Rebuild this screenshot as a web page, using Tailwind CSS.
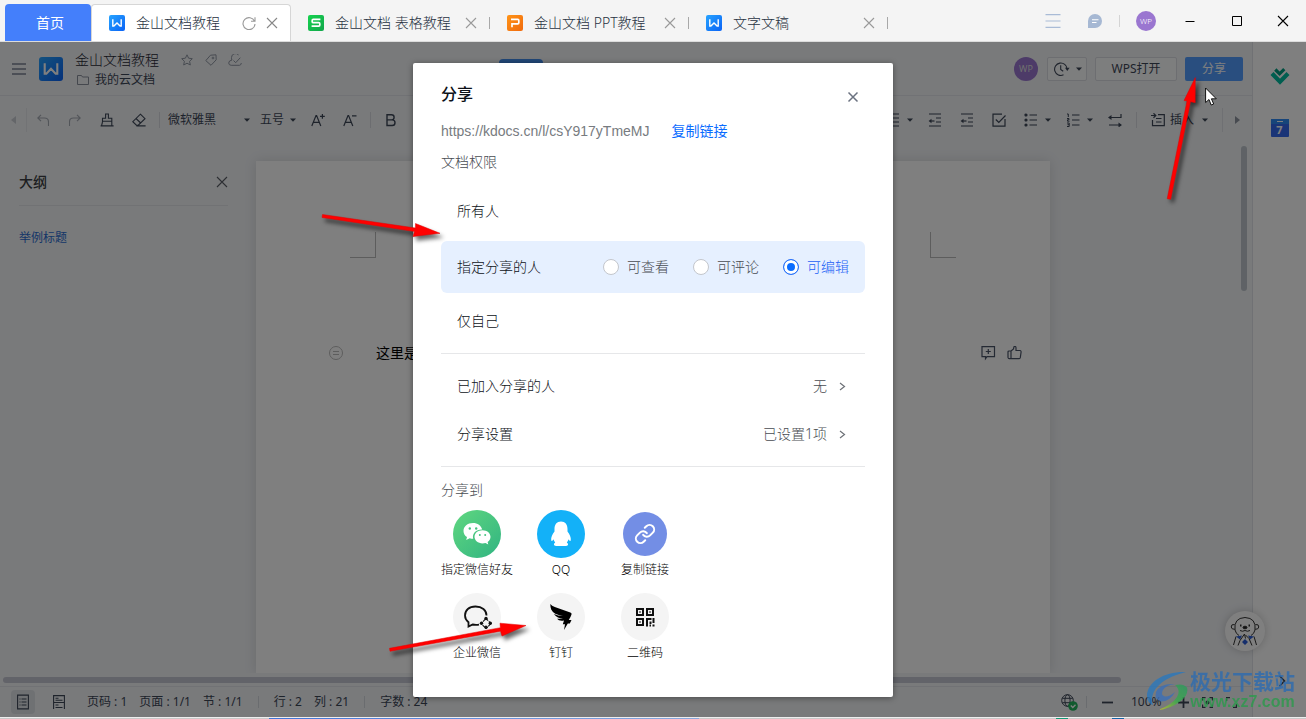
<!DOCTYPE html>
<html lang="zh-CN">
<head>
<meta charset="utf-8">
<meta name="viewport" content="width=device-width, initial-scale=1">
<title>金山文档教程</title>
<script src="https://cdn.jsdelivr.net/npm/@tailwindcss/browser@4"></script>
</head>
<body class="flex h-screen flex-col overflow-hidden bg-[#f4f4f4] font-['Noto_Sans','Noto_Sans_CJK_SC',sans-serif] text-sm font-light text-[#3d4757]">

<svg class="absolute size-0" aria-hidden="true">
  <defs>
    <linearGradient id="g-blue" x1="0" y1="0" x2="1" y2="1"><stop offset="0" stop-color="#27a4ff"/><stop offset="1" stop-color="#0a62f5"/></linearGradient>
    <linearGradient id="g-green" x1="0" y1="0" x2="1" y2="1"><stop offset="0" stop-color="#16d34f"/><stop offset="1" stop-color="#12a64b"/></linearGradient>
    <linearGradient id="g-orange" x1="0" y1="0" x2="1" y2="1"><stop offset="0" stop-color="#ff9417"/><stop offset="1" stop-color="#f06a0e"/></linearGradient>
    <symbol id="i-w" viewBox="0 0 16 16"><rect width="16" height="16" rx="2" fill="url(#g-blue)"/><path d="M3.800 4.200v6.900h1.100L8 7.900l3.100 3.200h1.100V4.200" fill="none" stroke="#fff" stroke-width="1.400"/></symbol>
    <symbol id="i-s" viewBox="0 0 16 16"><rect width="16" height="16" rx="2" fill="url(#g-green)"/><path d="M12.400 4.400H5.200q-1 0-1 1v1.300q0 1 1 1h5.600q1 0 1 1v1.400q0 1-1 1H3.600" fill="none" stroke="#fff" stroke-width="1.700"/></symbol>
    <symbol id="i-p" viewBox="0 0 16 16"><rect width="16" height="16" rx="2" fill="url(#g-orange)"/><path d="M4 4.400h6.800q1 0 1 1v2.400q0 1-1 1H5v3.400" fill="none" stroke="#fff" stroke-width="1.700"/></symbol>
    <symbol id="i-x" viewBox="0 0 12 12"><path d="M1 1l10 10M11 1L1 11" fill="none" stroke="currentColor" stroke-width="1.100"/></symbol>
    <symbol id="i-caret" viewBox="0 0 6 4"><path d="M0 .5h6L3 3.700z" fill="currentColor"/></symbol>
  </defs>
</svg>

<!-- Window title bar with document tabs -->
<header class="flex h-[42px] shrink-0 items-end border-b border-[#dcdcdc] pl-[5px]">
  <button class="h-[37px] w-[86px] rounded-t-sm bg-[#447ffb] pl-1 font-normal text-white">首页</button>
  <nav class="flex h-[37px] items-center text-[#283242]">
    <div class="flex h-full w-[200px] items-center rounded-t-sm border border-b-0 border-[#d6d6d6] bg-white pl-[17px] pr-3">
      <svg class="size-4 shrink-0"><use href="#i-w"/></svg>
      <a href="#" class="ml-[11px] flex-1">金山文档教程</a>
      <button aria-label="刷新" class="mr-[10px] text-[#999]"><svg class="size-[14px]" viewBox="0 0 14 14" fill="none" stroke="currentColor" stroke-width="1.100"><path d="M12.500 5.200A6 6 0 1 0 13 8M13 1.200v4H9"/></svg></button>
      <button aria-label="关闭" class="text-[#888]"><svg class="size-3"><use href="#i-x"/></svg></button>
    </div>
    <div class="flex h-full w-[199px] items-center pl-[17px]">
      <svg class="size-4 shrink-0"><use href="#i-s"/></svg>
      <a href="#" class="ml-[11px] flex-1 overflow-hidden whitespace-nowrap">金山文档 表格教程</a>
      <button aria-label="关闭" class="mr-3 text-[#999]"><svg class="size-3"><use href="#i-x"/></svg></button>
      <span class="h-3 w-px bg-[#a8a8a8]"></span>
    </div>
    <div class="flex h-full w-[199px] items-center pl-[17px]">
      <svg class="size-4 shrink-0"><use href="#i-p"/></svg>
      <a href="#" class="ml-[11px] flex-1 overflow-hidden whitespace-nowrap">金山文档 PPT教程</a>
      <button aria-label="关闭" class="mr-3 text-[#999]"><svg class="size-3"><use href="#i-x"/></svg></button>
      <span class="h-3 w-px bg-[#a8a8a8]"></span>
    </div>
    <div class="flex h-full w-[199px] items-center pl-[17px]">
      <svg class="size-4 shrink-0"><use href="#i-w"/></svg>
      <a href="#" class="ml-[11px] flex-1">文字文稿</a>
      <button aria-label="关闭" class="mr-3 text-[#999]"><svg class="size-3"><use href="#i-x"/></svg></button>
      <span class="h-3 w-px bg-[#a8a8a8]"></span>
    </div>
  </nav>
  <div class="ml-auto flex h-full items-center pr-[17px]">
    <button aria-label="菜单" class="text-[#a9bbd6]"><svg class="size-4" viewBox="0 0 16 16" stroke="currentColor" stroke-width="1.200"><path d="M.5 1.600h15M.5 8h15M.5 14.400h15"/></svg></button>
    <button aria-label="消息" class="ml-[27px]"><svg class="size-[14px]" viewBox="0 0 14 14"><path d="M7 0a7 7 0 0 1 0 14H0V7a7 7 0 0 1 7-7z" fill="#a6b8d3"/><path d="M4 5.700h6.500M4 8.500h4.500" stroke="#fff" stroke-width="1.100"/></svg></button>
    <span class="ml-[17px] h-3 w-px bg-[#d4d4d4]"></span>
    <span class="ml-4 flex size-5 items-center justify-center rounded-full bg-[#9a76d0] text-[8px] text-white">WP</span>
    <button aria-label="最小化" class="ml-7 text-black"><svg class="size-3" viewBox="0 0 12 12" stroke="currentColor"><path d="M1.500 6.500h9"/></svg></button>
    <button aria-label="最大化" class="ml-[35px] text-black"><svg class="size-3" viewBox="0 0 12 12" fill="none" stroke="currentColor"><path d="M1.500 1.500h9v9h-9z"/></svg></button>
    <button aria-label="关闭窗口" class="ml-[34px] text-black"><svg class="size-3"><use href="#i-x"/></svg></button>
  </div>
</header>

<div class="relative flex min-h-0 flex-1 bg-[#f2f4f7]">
  <main class="flex min-w-0 flex-1 flex-col">
    <!-- Document header -->
    <div class="flex h-[54px] shrink-0 items-center border-b border-[#e3e5ea]">
      <div class="flex w-[499px] shrink-0 items-center pl-3">
        <button aria-label="菜单" class="text-[#7c8394]"><svg class="size-[14px]" viewBox="0 0 14 14" stroke="currentColor" stroke-width="1.600"><path d="M0 2h14M0 7h14M0 12h14"/></svg></button>
        <svg class="ml-[13px] size-6"><use href="#i-w"/></svg>
        <div class="ml-3 pt-0.5">
          <div class="flex h-[21px] items-center">
            <h1 class="leading-5 text-[#1f2733]">金山文档教程</h1>
            <button aria-label="收藏" class="ml-[22px] text-[#9097a3]"><svg class="size-3" viewBox="0 0 12 12" fill="none" stroke="currentColor"><path d="M6 .8l1.600 3.400 3.700.5-2.700 2.600.7 3.700L6 9.200 2.700 11l.7-3.700L.7 4.700l3.700-.5z"/></svg></button>
            <button aria-label="标签" class="ml-3 text-[#9097a3]"><svg class="size-3" viewBox="0 0 12 12" fill="none" stroke="currentColor"><path d="M5.500 1.200l5.500-.4.200 5L6 11.300.8 6.600z"/><circle cx="8" cy="4" r=".9"/></svg></button>
            <button aria-label="同步" class="ml-[11px] text-[#9097a3]"><svg class="h-3 w-[14px]" viewBox="0 0 14 12" fill="none" stroke="currentColor"><path d="M10.500.9A4 4 0 0 0 3.500 3.500Q3.300 5 4 6 .8 6.500.7 9q.2 2.300 2.500 2.300h8.300Q13.300 11 13.300 9M5.500 6.500l2.200 2.200 4.600-5"/></svg></button>
          </div>
          <a href="#" class="flex h-[19px] items-center gap-1.5 pl-0.5 text-xs font-normal"><svg class="h-[10px] w-3 text-[#8b919c]" viewBox="0 0 12 10" fill="none" stroke="currentColor"><path d="M.5.500h4l1 1.500h6v7.500H.5z"/></svg>我的云文档</a>
        </div>
      </div>
      <span class="h-5 w-11 rounded-sm bg-[#438eee]"></span>
      <div class="ml-auto flex items-center pr-[9px] text-xs font-normal">
        <span class="flex size-6 items-center justify-center rounded-full bg-[#9a76d0] text-[9px] text-[#ddd]">WP</span>
        <button aria-label="历史记录" class="ml-[9px] flex h-6 w-10 items-center justify-between rounded-xs border border-[#dadce2] bg-[#fbfcfd] pl-1.5 pr-1"><svg class="h-[14px] w-4" viewBox="0 0 16 14" fill="none" stroke="currentColor" stroke-width="1.100"><path d="M13 7a6.200 6.200 0 1 0-3.500 5.800M6.700 3.300v4.200l2.500 1.800"/><path d="M11 5.800h4.600L13.300 9z" fill="currentColor" stroke="none"/></svg><svg class="h-1 w-1.5"><use href="#i-caret"/></svg></button>
        <button class="ml-2 h-6 w-[82px] rounded-xs border border-[#dadce2] bg-[#fbfcfd]">WPS打开</button>
        <button class="ml-2 h-6 w-[58px] rounded-xs bg-[#529dff] text-white">分享</button>
      </div>
    </div>

    <!-- Formatting toolbar -->
    <div class="flex h-12 shrink-0 items-center justify-between text-xs font-normal">
      <div class="flex h-8 items-center">
        <button aria-label="向左滚动" class="flex h-6 w-[27px] items-center justify-center border-r border-[#e4e6ea] text-[#c9ccd2]"><svg class="h-2 w-[5px]" viewBox="0 0 5 8"><path d="M5 0v8L0 4z" fill="currentColor"/></svg></button>
        <button aria-label="撤销" class="flex w-8 justify-center text-[#a5aab3]"><svg class="size-3" viewBox="0 0 12 12" fill="none" stroke="currentColor" stroke-width="1.100"><path d="M4 .8L.8 4 4 7.200M.8 4h6.700q4 0 4 4v4"/></svg></button>
        <button aria-label="重做" class="flex w-8 justify-center text-[#a5aab3]"><svg class="size-3" viewBox="0 0 12 12" fill="none" stroke="currentColor" stroke-width="1.100"><path d="M8 .8L11.200 4 8 7.200M11.200 4H4.500q-4 0-4 4v4"/></svg></button>
        <button aria-label="格式刷" class="flex w-8 justify-center"><svg class="size-[14px]" viewBox="0 0 14 14" fill="none" stroke="currentColor" stroke-width="1.100"><path d="M2.500 9V5.200H5.600V1h2.800v4.200h3.400V9M2.500 8.200h9.300v4.600M.6 12.900h13M2.500 9L1.500 12.900"/></svg></button>
        <button aria-label="清除格式" class="flex w-8 justify-center"><svg class="size-[14px]" viewBox="0 0 14 14" fill="none" stroke="currentColor" stroke-width="1.100"><path d="M8.400 1.200l4.600 4.500-6.700 6.500H4.400L.8 8.700zM4 5.500l4.700 4.500M4.400 12.900h9.200"/></svg></button>
        <span class="ml-1 h-4 w-px bg-[#d9dbe0]"></span>
        <label class="ml-2 flex w-[82px] items-center justify-between"><select aria-label="字体" class="w-[70px] appearance-none"><option>微软雅黑</option></select><svg class="h-1 w-1.5"><use href="#i-caret"/></svg></label>
        <label class="ml-[10px] flex w-9 items-center justify-between"><select aria-label="字号" class="w-7 appearance-none"><option>五号</option></select><svg class="h-1 w-1.5 shrink-0"><use href="#i-caret"/></svg></label>
        <button aria-label="增大字号" class="ml-[6px] flex w-8 justify-center"><svg class="size-[14px]" viewBox="0 0 14 14" fill="none" stroke="currentColor" stroke-width="1.200"><path d="M.8 13L5 2.500h.6L9.800 13M2.400 9.400h5.900M9 3.300h4.800M11.400 1v4.700"/></svg></button>
        <button aria-label="减小字号" class="flex w-8 justify-center"><svg class="size-[14px]" viewBox="0 0 14 14" fill="none" stroke="currentColor" stroke-width="1.200"><path d="M.8 13L5 2.500h.6L9.800 13M2.400 9.400h5.900M9 2.800h4.500"/></svg></button>
        <span class="ml-1 h-4 w-px bg-[#d9dbe0]"></span>
        <button aria-label="加粗" class="ml-1 flex w-8 justify-center"><svg class="size-[14px]" viewBox="0 0 14 14" fill="none" stroke="currentColor" stroke-width="1.400"><path d="M3 1.700h4.500a2.500 2.500 0 0 1 0 5.200H3zm0 5.200h5.200a2.800 2.800 0 0 1 0 5.600H3z"/></svg></button>
      </div>
      <div class="flex h-8 items-center">
        <button aria-label="对齐" class="flex w-[42px] items-center pl-[9px]"><svg class="size-[14px]" viewBox="0 0 14 14" stroke="currentColor" stroke-width="1.200"><path d="M0 1h13M0 5h13M0 9h13M0 13h13"/></svg><svg class="ml-[7px] h-1 w-1.5"><use href="#i-caret"/></svg></button>
        <button aria-label="减少缩进" class="flex w-8 justify-center"><svg class="size-[14px]" viewBox="0 0 14 14" fill="none" stroke="currentColor" stroke-width="1.200"><path d="M1 1h12M8 5h5M8 9h5M1 13h12"/><path d="M6.500 8H2"/><path d="M3.500 5.800v4.400L.6 8z" fill="currentColor" stroke="none"/></svg></button>
        <button aria-label="增加缩进" class="flex w-8 justify-center"><svg class="size-[14px]" viewBox="0 0 14 14" fill="none" stroke="currentColor" stroke-width="1.200"><path d="M1 1h12M8 5h5M8 9h5M1 13h12"/><path d="M6.500 8H2"/><path d="M3.500 5.800v4.400L.6 8z" fill="currentColor" stroke="none"/></svg></button>
        <button aria-label="任务列表" class="flex w-8 justify-center"><svg class="size-[14px]" viewBox="0 0 14 14" fill="none" stroke="currentColor" stroke-width="1.200"><path d="M10 1.100H1v12h12V6M3.800 6.500l3 3L13.500 2.500"/></svg></button>
        <button aria-label="项目符号" class="flex w-[42px] items-center pl-[9px]"><svg class="size-[14px]" viewBox="0 0 14 14" fill="currentColor" stroke="currentColor" stroke-width="1.200"><circle cx="2" cy="2" r="1"/><circle cx="2" cy="7" r="1"/><circle cx="2" cy="12" r="1"/><path d="M5.500 2H13M5.500 7H13M5.500 12H13"/></svg><svg class="ml-[7px] h-1 w-1.5"><use href="#i-caret"/></svg></button>
        <button aria-label="编号" class="flex w-[42px] items-center pl-[9px]"><svg class="size-[14px]" viewBox="0 0 14 14" fill="none" stroke="currentColor"><path d="M6 2h7.500M6 7h7.500M6 12h7.500" stroke-width="1.200"/><path d="M1 1h1.300V4M1 5.500h2v1.300H1.500v1.400H3.500M1 10h2.200v3.500H1M1.500 11.700h1.700"/></svg><svg class="ml-[7px] h-1 w-1.5"><use href="#i-caret"/></svg></button>
        <button aria-label="换行" class="flex w-8 justify-center"><svg class="size-[14px]" viewBox="0 0 14 14" fill="none" stroke="currentColor" stroke-width="1.200"><path d="M13 1v3.500H2M1 12H13"/><path d="M3.500 2v5L0 4.500zM10.500 9.500v5L14 12z" fill="currentColor" stroke="none"/></svg></button>
        <span class="ml-[5px] h-4 w-px bg-[#d9dbe0]"></span>
        <button class="ml-1 flex w-[81px] items-center pl-[10px]"><svg class="size-[14px]" viewBox="0 0 14 14" fill="none" stroke="currentColor" stroke-width="1.200"><path d="M7 1.600h6.300v11H1.500V7M5 5.500h5.500M5 9h5.500M0 2.500h4.500M2.500.3l2.300 2.200-2.300 2.200"/></svg><span class="ml-[5px]">插入</span><svg class="ml-2 h-1 w-1.5"><use href="#i-caret"/></svg></button>
        <button aria-label="向右滚动" class="flex h-6 w-[30px] items-center justify-center border-l border-[#dfe1e6] text-[#8f95a0]"><svg class="h-2 w-[5px]" viewBox="0 0 5 8"><path d="M0 0v8l5-4z" fill="currentColor"/></svg></button>
      </div>
    </div>

    <!-- Outline panel and page -->
    <div class="flex min-h-0 flex-1 overflow-hidden">
      <aside class="w-64 shrink-0 pl-[19px] pr-7 pt-6">
        <div class="flex h-[38px] items-start justify-between border-b border-[#e2e4e8]">
          <h2 class="py-1 font-medium leading-5 text-[#3d3f44]">大纲</h2>
          <button aria-label="关闭大纲" class="py-2 text-[#5a5e66]"><svg class="size-3"><use href="#i-x"/></svg></button>
        </div>
        <a href="#" class="mt-[22px] block text-xs font-normal leading-5 text-[#2b6cd0]">举例标题</a>
      </aside>
      <article class="mt-[17px] w-[794px] shrink-0 bg-white shadow-[0_0_12px_rgba(0,0,0,0.12)]">
        <div class="flex justify-between px-[94px] pt-[71px]">
          <span class="size-[26px] border-b border-r border-[#bbb]"></span>
          <span class="size-[26px] border-b border-l border-[#bbb]"></span>
        </div>
        <div class="mt-[84px] flex h-[22px] items-center pl-[73px] pr-7 font-normal text-black">
          <svg class="size-[14px] text-[#bbb]" viewBox="0 0 14 14" fill="none" stroke="currentColor"><circle cx="7" cy="7" r="6.500"/><path d="M4 5.500h6M4 8.500h6"/></svg>
          <p class="ml-[33px]">这里是</p>
          <button aria-label="添加评论" class="ml-auto text-[#4a5468]"><svg class="size-[15px]" viewBox="0 0 15 15" fill="none" stroke="currentColor" stroke-width="1.200"><path d="M1 .6h12.500v10H6l-1.500 2v-2H1zM7.300 3v5M4.800 5.500h5"/></svg></button>
          <button aria-label="点赞" class="ml-[11px] text-[#4a5468]"><svg class="size-[15px]" viewBox="0 0 15 15" fill="none" stroke="currentColor" stroke-width="1.200"><path d="M4 5L6.500 3 7 .7Q8.800-.1 9 1.700V4.500h4.200q1 .3.900 1.500l-.8 5.700q-.3 1-1 1H4M4 5v7.700M4 5H2Q1 5 1 6v5.500q.2 1.200 1.200 1.200H4"/></svg></button>
        </div>
      </article>
      <div class="ml-auto mr-[5px] mt-0.5 h-[145px] w-1.5 rounded-full bg-[#bfc5cc]"></div>
    </div>
    <div class="flex h-[13px] shrink-0 items-start pl-[3px] pr-[131px] pt-1"><div class="h-1.5 flex-1 rounded-full bg-[#c4c6d2]"></div></div>

    <!-- Status bar -->
    <footer class="flex h-[31px] shrink-0 items-center border-t border-[#e3e5ea] pl-[11px] pr-[15px] text-xs font-normal">
      <button aria-label="页面视图" class="flex size-6 items-center justify-center rounded-sm bg-[#dfe3e7]"><svg class="h-4 w-3" viewBox="0 0 12 16" fill="none" stroke="currentColor" stroke-width="1.100"><path d="M.6 1.100h10.800v13.800H.6zM2.500 5h1M4.500 5h5M2.500 8h1M4.500 8h5M2.500 11h1M4.500 11h5"/></svg></button>
      <button aria-label="目录视图" class="ml-[18px]"><svg class="h-[14px] w-3" viewBox="0 0 12 14" fill="none" stroke="currentColor" stroke-width="1.100"><path d="M.6 14V.6h10.800V14M.6 7.500h10.800M2.500 3.300h3M2.500 5.300h7M2.500 10h3M2.500 12.500h7"/></svg></button>
      <span class="ml-[22px]">页码 : 1</span><span class="ml-3">页面 : 1/1</span><span class="ml-3">节 : 1/1</span>
      <span class="mx-[15px] h-3 w-px bg-[#d5d8de]"></span>
      <span>行 : 2</span><span class="ml-3">列 : 21</span>
      <span class="mx-[15px] h-3 w-px bg-[#d5d8de]"></span>
      <span>字数 : 24</span>
      <button aria-label="语言" class="ml-auto"><svg class="size-[17px]" viewBox="0 0 17 17" fill="none" stroke="currentColor"><circle cx="6.500" cy="6.500" r="5.800"/><ellipse cx="6.500" cy="6.500" rx="2.600" ry="5.800"/><path d="M1.300 4.300h10.400M1.300 8.700h10.400"/><circle cx="12" cy="12" r="4.800" fill="#22b45c" stroke="none"/><path d="M9.800 11.500l2 2 2.700-2.700" stroke="#fff" stroke-width="1.400"/></svg></button>
      <span class="ml-2 h-3 w-px bg-[#d5d8de]"></span>
      <button aria-label="缩小" class="ml-[15px]"><svg class="size-[11px]" viewBox="0 0 11 11" stroke="currentColor" stroke-width="1.800"><path d="M0 5.500h11"/></svg></button>
      <span class="ml-[18px] w-[30px]">100%</span>
      <button aria-label="放大" class="ml-[17px]"><svg class="size-[11px]" viewBox="0 0 11 11" stroke="currentColor" stroke-width="1.800"><path d="M0 5.500h11M5.500 0v11"/></svg></button>
      <button aria-label="适应页宽" class="ml-[13px]"><svg class="size-[11px]" viewBox="0 0 11 11" fill="none" stroke="currentColor" stroke-width="1.200"><path d="M.6 3.500V.6h3M7.500.6h2.900v2.900M10.400 7.500v2.900H7.500M3.500 10.400H.6V7.500"/><circle cx="5.500" cy="5.500" r="1.500" fill="currentColor"/></svg></button>
      <button aria-label="全屏" class="ml-[13px]"><svg class="size-[11px]" viewBox="0 0 11 11" fill="none" stroke="currentColor" stroke-width="1.200"><path d="M.6 4V.6H4M10.400 7v3.400H7"/></svg></button>
    </footer>
  </main>

  <!-- Side apps -->
  <aside class="flex w-[54px] shrink-0 flex-col items-center border-l border-[#e0e3e8] bg-white pt-[25px]">
    <button aria-label="稻壳"><svg class="h-[18px] w-5" viewBox="0 0 20 18" fill="none"><path d="M2 6.500l8 8.300 8-8.300" stroke="#00bda0" stroke-width="4.200"/><path d="M5.300 2.500l4.300 4.300 4.700-4.700" stroke="#009c80" stroke-width="3.200"/></svg></button>
    <button class="mt-[34px] flex h-[18px] w-[18px] flex-col items-center rounded-[1px] bg-[#3568ee] text-[11px] font-bold leading-3 text-white" aria-label="日历"><span class="flex h-[5px] w-full items-center justify-center bg-[#2e8bf5]"><span class="h-px w-1.5 bg-white"></span></span>7</button>
    <button aria-label="展开" class="mb-[30px] mt-auto pl-1"><svg class="h-3 w-2" viewBox="0 0 8 12" fill="none" stroke="currentColor" stroke-width="1.600"><path d="M1.500.8L6.500 6l-5 5.200"/></svg></button>
  </aside>

  <button aria-label="助手" class="absolute bottom-[66px] right-[41px] flex size-10 items-center justify-center rounded-full bg-white shadow-[0_0_10px_rgba(0,0,0,0.2)]">
    <svg class="size-[30px]" viewBox="0 0 30 30" fill="none" stroke="#333"><path d="M5 14Q3.500 2 15 1.500 26.500 2 25 14q-1 4-4 5.500M5 14q1 4 4 5.500"/><path d="M4.600 8.500Q1 8 1.200 11q.3 2.500 3.600 2.300M25.400 8.500Q29 8 28.800 11q-.3 2.500-3.600 2.300"/><path d="M10 9.500h1.500M18.500 9.500H20" stroke-width="1.800"/><ellipse cx="15" cy="11.500" rx="2" ry="1.300" fill="#222"/><path d="M10 14.500q2.500 1.500 5 0 2.500 1.500 5 0"/><path d="M6 20.500l4 3 2-4zM24 20.500l-4 3-2-4zM15 23l3 3-3 3-3-3z" fill="#2c5fd8" stroke="none"/><path d="M6 20.500L3.500 29M8 29.500l2-5 4.500-6.500 1 4.500M22 29.500l-3-7-3.500-3.500M24 20.500l2.500 8.500"/></svg>
  </button>

  <!-- Share dialog -->
  <div class="absolute inset-0 flex items-center justify-center bg-black/50">
    <section role="dialog" aria-labelledby="dlg-title" class="relative w-[480px] rounded-xs bg-white pb-[35px] pt-5 text-[#0d1118] shadow-[0_1px_6px_rgba(0,0,0,0.4)]">
      <div class="flex items-start justify-between pl-7 pr-[26px]">
        <h2 id="dlg-title" class="text-base font-medium leading-[22px]">分享</h2>
        <button aria-label="关闭" class="flex size-7 items-center justify-center text-[#6b7280]"><svg class="size-3" viewBox="0 0 12 12" fill="none" stroke="currentColor" stroke-width="1.500"><path d="M1.500 1.500l9 9M10.500 1.500l-9 9"/></svg></button>
      </div>
      <div class="flex h-10 items-center gap-[22px] px-7">
        <span class="font-['Liberation_Sans',sans-serif] text-[#777b80]">https://kdocs.cn/l/csY917yTmeMJ</span>
        <a href="#" class="font-normal text-[#0a6cff]">复制链接</a>
      </div>
      <p class="px-7 leading-[22px] text-[#484c52]">文档权限</p>
      <div class="mx-7 mt-3">
        <div class="flex h-[52px] items-center px-4">所有人</div>
        <div class="mt-1 flex h-[52px] items-center rounded-md bg-[#e6f0ff] px-4">
          <span>指定分享的人</span>
          <div class="ml-auto flex gap-6 text-[#484c52]">
            <label class="flex items-center gap-2"><input type="radio" name="perm" class="size-4 appearance-none rounded-full border border-[#c3c6cc] bg-white">可查看</label>
            <label class="flex items-center gap-2"><input type="radio" name="perm" class="size-4 appearance-none rounded-full border border-[#c3c6cc] bg-white">可评论</label>
            <label class="flex items-center gap-2 text-[#1c60f5]"><input type="radio" name="perm" checked class="size-4 appearance-none rounded-full border border-[#2e73f8] bg-[#0a6cff] shadow-[inset_0_0_0_3px_#fff]">可编辑</label>
          </div>
        </div>
        <div class="mb-1 flex h-14 items-center px-4">仅自己</div>
      </div>
      <div class="mx-7 border-y border-[#e6e7e9] py-2">
        <button class="flex h-12 w-full items-center px-4"><span>已加入分享的人</span><span class="ml-auto text-[#484c52]">无</span><svg class="ml-[10px] size-3 text-[#6e7278]" viewBox="0 0 12 12" fill="none" stroke="currentColor" stroke-width="1.200"><path d="M3 3l4.500 3.500L3 10"/></svg></button>
        <button class="flex h-12 w-full items-center px-4"><span>分享设置</span><span class="ml-auto text-[#484c52]">已设置1项</span><svg class="ml-[10px] size-3 text-[#6e7278]" viewBox="0 0 12 12" fill="none" stroke="currentColor" stroke-width="1.200"><path d="M3 3l4.500 3.500L3 10"/></svg></button>
      </div>
      <p class="px-7 pt-3 leading-[22px] text-[#484c52]">分享到</p>
      <div class="ml-[22px] mt-[9px] grid w-[252px] grid-cols-3 gap-y-[14px] text-xs leading-[18px] text-black">
        <button class="flex flex-col items-center gap-[3px]"><span class="flex size-12 items-center justify-center rounded-full bg-linear-135 from-[#5fd77f] to-[#2fb481]"><svg class="h-[22px] w-7" viewBox="0 0 28 22" fill="#fff"><path d="M10 0C4.500 0 .5 3.500.5 8c0 2.600 1.300 4.700 3.500 6l-.8 3 3.500-1.700q1.700.5 3.500.5C8.800 10 13.500 6.300 19.200 6.500 18.300 2.700 14.500 0 10 0z"/><path d="M27.500 13.800c0-3.700-3.600-6.500-8-6.500s-8 2.800-8 6.500 3.600 6.600 8 6.600q1.500 0 3-.4l2.800 1.500-.7-2.500c1.800-1.300 2.900-3.100 2.900-5.200z"/><g fill="#46c480"><circle cx="6.800" cy="5.500" r="1.200"/><circle cx="13.200" cy="5.500" r="1.200"/><circle cx="16.800" cy="12" r="1"/><circle cx="22.200" cy="12" r="1"/></g></svg></span>指定微信好友</button>
        <button class="flex flex-col items-center gap-[3px]"><span class="flex size-12 items-center justify-center rounded-full bg-[#13b1f8]"><svg class="h-[26px] w-[22px]" viewBox="0 0 22 26" fill="#fff"><path d="M11 .5C6.800.5 4.500 3.500 4.500 8v2.500C2.500 13 .8 16.500 1.200 19.200c.4 1.500 1.500.5 2.300-.9q.5 2 1.700 3.300c-1.700.9-1.900 3.200 1 3.400h4.800H16c2.700-.2 2.500-2.500.8-3.400q1.200-1.300 1.700-3.300c.8 1.400 1.900 2.400 2.300.9.400-2.700-1.300-6.200-3.300-8.700V8C17.500 3.500 15.200.5 11 .5z"/></svg></span>QQ</button>
        <button class="flex flex-col items-center gap-[3px]"><span class="flex size-12 items-center justify-center"><span class="flex size-11 items-center justify-center rounded-full bg-[#738ee5]"><svg class="size-[22px]" viewBox="0 0 24 24" fill="none" stroke="#fff" stroke-width="2.200" stroke-linecap="round" stroke-linejoin="round"><path d="M10 13a5 5 0 0 0 7.540.54l3-3a5 5 0 0 0-7.070-7.070l-1.720 1.710"/><path d="M14 11a5 5 0 0 0-7.540-.54l-3 3a5 5 0 0 0 7.070 7.070l1.710-1.710"/></svg></span></span>复制链接</button>
        <button class="flex flex-col items-center gap-[3px]"><span class="flex size-12 items-center justify-center rounded-full bg-[#f4f4f4]"><svg class="h-6 w-[30px]" viewBox="0 0 30 24" fill="none" stroke="#111" stroke-width="1.800"><path d="M24.500 10.500C24.500 5 20 1.500 13.500 1.500S3 5.200 3 10.500c0 3 1.500 5 3.500 6.700v4.300l4.200-2q3 .6 6.300.1"/><path d="M24 13.500l5 5-5 5-5-5z" stroke-width="1.100" stroke-dasharray="3 1"/><g fill="#111" stroke="none"><circle cx="24" cy="13.500" r="1.700"/><circle cx="28.300" cy="18.200" r="1.700"/><circle cx="19.500" cy="18.200" r="1.700"/><circle cx="24" cy="22.300" r="1.700"/></g></svg></span>企业微信</button>
        <button class="flex flex-col items-center gap-[3px]"><span class="flex size-12 items-center justify-center rounded-full bg-[#f4f4f4]"><svg class="h-[26px] w-[22px]" viewBox="0 0 22 26" fill="#000"><path d="M.3 0q1.500 2 4.500 3l15.500 5.500q1.700.7 1.200 2-.8 2.500-2.700 5.500H21.500l-1.700 3.500h-2L14 26l1-5.800h-2.200l1.200-3.700q-5 .9-7-1.800 3 .4 6-.3-5.500 0-9.200-4.500Q8 12 13 12 3.500 10.500 1.200 5.500.3 3 .3 0z"/></svg></span>钉钉</button>
        <button class="flex flex-col items-center gap-[3px]"><span class="flex size-12 items-center justify-center rounded-full bg-[#f4f4f4]"><svg class="size-5" viewBox="0 0 20 20" fill="none" stroke="#111" stroke-width="2"><path d="M2 2h6v6H2zM12 2h6v6h-6zM2 12h6v6H2z"/><path d="M4.500 5h1M14.500 5h1M4.500 15h1M11 12h5.500M12 11v8.500M15.500 14.500v2.500M18.500 11v5M14.500 18.500h1.500M17.500 18.500h2"/></svg></span>二维码</button>
      </div>

      <!-- Pointer arrows -->
      <svg class="pointer-events-none absolute left-[-97px] top-[145px] h-10 w-32 drop-shadow-[3px_4px_2px_rgba(0,0,0,0.6)]" viewBox="0 0 128 40"><path d="M6.500 6.500L6 9.500 98.500 23.500l-1.500 5L124 25.300 99.500 15.500l-.1 4.500z" fill="#f00" stroke="#e00000" stroke-width=".5"/></svg>
      <svg class="pointer-events-none absolute left-[-30px] top-[552px] h-[46px] w-[150px] drop-shadow-[3px_4px_2px_rgba(0,0,0,0.6)]" viewBox="0 0 150 46"><path d="M6.500 33.300l.5 3L117.500 16.200l1.500 4.800L143 10.500l-26-2.300.3 4.500z" fill="#f00" stroke="#e00000" stroke-width=".5"/></svg>
    </section>
  </div>

  <svg class="pointer-events-none absolute right-[93px] top-[30px] h-[136px] w-[54px] drop-shadow-[3px_3px_2px_rgba(0,0,0,0.6)]" viewBox="0 0 54 136"><path d="M8.200 126.700l3.500.6L31.500 29.700l4.700 1L36.300 5.500 25 28.500l3 .5z" fill="#f00" stroke="#e00000" stroke-width=".5"/></svg>
  <svg class="pointer-events-none absolute right-[88px] top-[45px] h-[19px] w-[13px]" viewBox="0 0 13 19"><path d="M.6 1v14.500l3.400-3L6.200 18l2.500-1-2.300-5.200h4.900z" fill="#fff" stroke="#000" stroke-width=".9"/></svg>

  <!-- Site mark -->
  <div class="pointer-events-none absolute bottom-[5px] right-[11px] flex items-center gap-0.5 opacity-80">
    <svg class="h-10 w-[42px]" viewBox="0 0 42 40"><defs><linearGradient id="g-mark" x1="0" y1="1" x2="1" y2="0"><stop offset="0" stop-color="#c5c726"/><stop offset=".5" stop-color="#37ab4b"/><stop offset="1" stop-color="#2b9a5e"/></linearGradient></defs><path d="M40 1C20 0 1 10 1 25q.3 7 6 9C3 22 12 8 40 1z" fill="#2b78bd"/><path d="M29 13q-15-1-19 8-2 8 5 9.500 9 0 14-9.500-6 5-10 4.500-5-1.500-2-6.500 3-5 12-6z" fill="#3b6fb8"/><path d="M29 14q8-2 12 2.500 2 8-7 14-9 7-22 8.500 14-5 19-13 4-7-2-12z" fill="url(#g-mark)"/></svg>
    <div class="text-center font-bold">
      <div class="text-[21px] leading-[22px] text-[#2d6cb0]">极光下载站</div>
      <div class="font-['Liberation_Sans',sans-serif] text-base leading-5 text-[#2c9a4c]">www.xz7.com</div>
    </div>
  </div>
</div>

<!-- Edge of the window underneath -->
<div class="flex h-0.5 shrink-0 border-t border-[#eee] bg-[#c9c9c9] pl-[269px]"><span class="h-px w-[430px] bg-linear-to-r from-[#3f74d8] to-[#8aa9dd]"></span><span class="ml-[357px] h-px w-3 bg-[#129a78]"></span><span class="ml-11 h-px w-3 bg-[#1465a8]"></span></div>
</body>
</html>
